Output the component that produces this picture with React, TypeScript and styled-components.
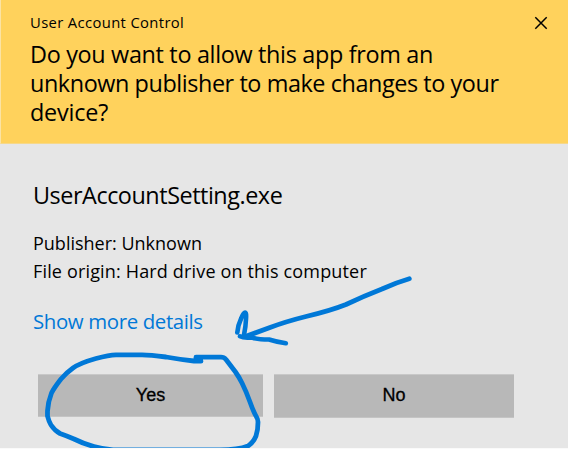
import React from "react";
import styled, { createGlobalStyle } from "styled-components";

const GlobalStyle = createGlobalStyle`
  body { margin: 0; background: #fafafa; }
`;

const Dialog = styled.main`
  position: relative;
  display: flex;
  flex-direction: column;
  width: 568px;
  height: 449px;
  overflow: hidden;
  box-sizing: border-box;
  border-bottom: 1px solid #fafafa;
  background: #e6e6e6;
  color: #000;
  font-family: "Open Sans", "Noto Sans", sans-serif;
`;

const Header = styled.header`
  display: flex;
  justify-content: space-between;
  align-items: flex-start;
  box-sizing: border-box;
  height: 144px;
  padding: 11px 20px 0 29px;
  border-left: 1px solid #fbe3a4;
  border-bottom: 1px solid #f6d88a;
  background: #ffd25c;
`;

const Caption = styled.div`
  font-size: 14.8px;
  line-height: 22px;
  letter-spacing: 0.36px;
  white-space: nowrap;
`;

const Question = styled.h1`
  margin: 7px 0 0;
  font-size: 23.4px;
  font-weight: 400;
  line-height: 29px;
`;

const Line = styled.span<{ $tracking: number }>`
  display: block;
  white-space: nowrap;
  letter-spacing: ${(p) => p.$tracking}px;
`;

const CloseButton = styled.button`
  display: flex;
  width: 14px;
  height: 14px;
  margin-top: 5px;
  padding: 0;
  border: 0;
  background: none;
`;

const Body = styled.section`
  display: flex;
  flex-direction: column;
  align-items: flex-start;
  padding: 35px 0 0 33px;
`;

const AppName = styled.h2`
  margin: 0;
  font-size: 23.4px;
  font-weight: 400;
  line-height: 32px;
  letter-spacing: -0.46px;
`;

const Details = styled.div`
  margin-top: 18px;
  font-size: 18px;
  line-height: 28px;
`;

const MoreLink = styled.a`
  margin-top: 21px;
  color: #0078d7;
  font-size: 20.4px;
  line-height: 30px;
  letter-spacing: -0.36px;
  white-space: nowrap;
`;

const Actions = styled.div`
  display: flex;
  align-items: flex-start;
  gap: 11px;
  margin: 38px 0 0 5px;
`;

const ActionButton = styled.button<{ $width: number; $height: number }>`
  box-sizing: border-box;
  width: ${(p) => p.$width}px;
  height: ${(p) => p.$height}px;
  padding: 0 0 2px;
  border: 0;
  border-top: 1px solid #c8c8c8;
  border-bottom: 1px solid #c4c4c4;
  background: #b8b8b8;
  color: #000;
  font-family: "Liberation Sans", Arial, sans-serif;
  font-size: 18px;
  line-height: 20px;
  -webkit-text-stroke: 0.3px #000;
`;

const Ink = styled.svg`
  position: absolute;
  inset: 0;
  pointer-events: none;
`;

export default function App() {
  return (
    <>
      <GlobalStyle />
      <Dialog>
        <Header>
          <div>
            <Caption>User Account Control</Caption>
            <Question>
              <Line $tracking={-0.32}>Do you want to allow this app from an</Line>
              <Line $tracking={-0.42}>unknown publisher to make changes to your</Line>
              <Line $tracking={-0.2}>device?</Line>
            </Question>
          </div>
          <CloseButton aria-label="Close">
            <svg width="14" height="14" viewBox="0 0 14 14">
              <path d="M1.3 1.3 12.7 12.7M12.7 1.3 1.3 12.7" stroke="#000" strokeWidth="1.5" />
            </svg>
          </CloseButton>
        </Header>
        <Body>
          <AppName>UserAccountSetting.exe</AppName>
          <Details>
            <Line $tracking={0}>Publisher: Unknown</Line>
            <Line $tracking={0.16}>File origin: Hard drive on this computer</Line>
          </Details>
          <MoreLink>Show more details</MoreLink>
          <Actions>
            <ActionButton $width={225} $height={43}>Yes</ActionButton>
            <ActionButton $width={240} $height={44}>No</ActionButton>
          </Actions>
        </Body>
        <Ink width="568" height="449" viewBox="0 0 568 449" fill="none" stroke="#0078d7" strokeLinecap="round" strokeLinejoin="round">
          <path
            strokeWidth="4.8"
            d="M201 361.2L194 361Q180 359.5 166 357Q150 354.8 142 354.8H116Q109 355 96 358.5Q80 363 73 368Q66 373 61 379Q54 388 51.5 393Q48 402 47.5 411V416Q49 422 51 425Q55 431 60 433.5Q67 436 74 439Q84 444 94 446.5Q103 449 113 450H220Q238 450 248 446Q253 443 256 436Q258 430 258 422Q258 419 256 416Q254 413 250 402Q246 391 242 383Q239 377 235.5 372L226 359.5Q224 357.2 221 357.2H196V361"
          />
          <path strokeWidth="4.8" d="M409.3 278.7Q396 282.5 382 289Q364 296 346 304.5Q331 310.5 306 316.5Q286 321.5 270 327.5L246 336.3" />
          <path strokeWidth="4.6" d="M237.3 332.5Q238 325 241.3 318Q243.5 312.5 245 312.5Q246.5 312.5 246 319Q245.8 326 244 335M240 336.3Q244 338.5 252 337.5Q258 339.5 269 339.5Q277 342 285.8 343.3" />
        </Ink>
      </Dialog>
    </>
  );
}
